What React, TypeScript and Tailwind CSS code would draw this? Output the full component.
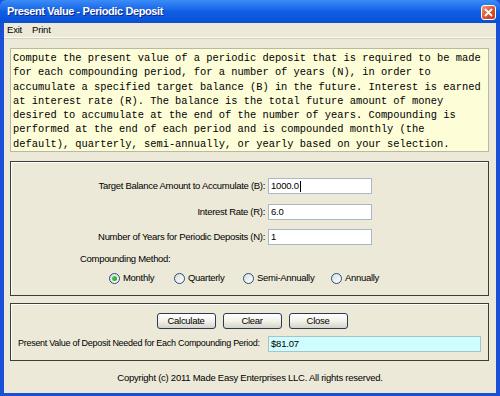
import React from 'react';

const sans = { fontFamily: '"Liberation Sans", Arial, sans-serif' };
const mono = { fontFamily: '"Liberation Mono", "Courier New", monospace' };

const description = [
  'Compute the present value of a periodic deposit that is required to be made',
  'for each compounding period, for a number of years (N), in order to',
  'accumulate a specified target balance (B) in the future. Interest is earned',
  'at interest rate (R). The balance is the total future amount of money',
  'desired to accumulate at the end of the number of years. Compounding is',
  'performed at the end of each period and is compounded monthly (the',
  'default), quarterly, semi-annually, or yearly based on your selection.',
];

const fields = [
  { label: 'Target Balance Amount to Accumulate (B):', value: '1000.0', mt: 'mt-0' },
  { label: 'Interest Rate (R):', value: '6.0', mt: 'mt-[10px]' },
  { label: 'Number of Years for Periodic Deposits (N):', value: '1', mt: 'mt-[9px]' },
];

const methods = [
  { label: 'Monthly', w: 'w-[65px]', checked: true },
  { label: 'Quarterly', w: 'w-[69px]', checked: false },
  { label: 'Semi-Annually', w: 'w-[88px]', checked: false },
  { label: 'Annually', w: 'w-[70px]', checked: false },
];

const Radio = ({ checked }: { checked: boolean }) => (
  <span className="flex h-[11px] w-[11px] items-center justify-center rounded-full border border-[#1c5180] bg-gradient-to-br from-[#dcdcd6] to-white">
    {checked && <span className="h-[5px] w-[5px] rounded-full bg-gradient-to-br from-[#55d655] to-[#1f9a1f]" />}
  </span>
);

const XpButton = ({ children }: { children: React.ReactNode }) => (
  <button className="flex h-[16px] w-[59px] items-center justify-center rounded-[3px] border border-[#2b3a55] bg-gradient-to-b from-white via-[#f3f2ec] to-[#d6d3c6] text-[9.5px] tracking-[-0.3px] text-black">
    {children}
  </button>
);

export default function App() {
  return (
    <div className="flex h-[396px] w-[500px] flex-col bg-[#1a4fd8]" style={sans}>
      {/* title bar */}
      <div className="flex h-[23px] shrink-0 items-center justify-between rounded-t-[6px] bg-gradient-to-b from-[#3d8cf7] via-[#0f5fe6] to-[#0a4fd4] pl-[7px] pr-[4px]">
        <span className="text-[11px] font-bold tracking-[-0.4px] text-white [text-shadow:1px_1px_0_#0a2a8a]">
          Present Value - Periodic Deposit
        </span>
        <span className="mt-[2px] flex h-[15px] w-[15px] items-center justify-center rounded-[3px] border border-white bg-gradient-to-br from-[#f29a72] via-[#e0542a] to-[#c4401c]">
          <svg width="9" height="9" viewBox="0 0 9 9">
            <path d="M1.5 1.5 L7.5 7.5 M7.5 1.5 L1.5 7.5" stroke="white" strokeWidth="1.8" strokeLinecap="round" />
          </svg>
        </span>
      </div>

      {/* window body */}
      <div className="mx-[4px] mb-[3px] flex flex-1 flex-col bg-[#ece9d8]">
        <div className="flex h-[15px] items-center gap-[10px] border-b border-[#fbfaf5] pl-[3px] text-[9.5px] tracking-[-0.2px] text-black shadow-[0_1px_0_#d4d0c0]">
          <span>Exit</span>
          <span>Print</span>
        </div>

        <div
          className="ml-[6px] mr-[7px] mt-[10px] h-[104px] whitespace-pre border border-[#b9b7a6] bg-[#fdfdd8] pl-[2px] pt-[2px] text-[10.4px] leading-[14.3px] text-black"
          style={mono}
        >
          {description.join('\n')}
        </div>

        {/* input panel */}
        <div className="ml-[6px] mr-[7px] mt-[9px] h-[135px] border border-[#3c3c3c] pt-[16px] shadow-[inset_1px_1px_0_#ffffff]">
          {fields.map((f) => (
            <div key={f.label} className={`flex h-[16px] items-center ${f.mt}`}>
              <span className="w-[254px] text-right text-[9.5px] tracking-[-0.3px] text-black">{f.label}</span>
              <span className="ml-[3px] flex h-[16px] w-[104px] items-center border border-[#a9b8c9] bg-white pl-[2px] text-[9.5px] tracking-[-0.2px] text-black">
                {f.value}
                {f.value === '1000.0' && <span className="ml-px h-[11px] w-px bg-black" />}
              </span>
            </div>
          ))}
          <div className="mt-[8px] pl-[69px] text-[9.5px] leading-[12px] tracking-[-0.3px] text-black">Compounding Method:</div>
          <div className="mt-[7px] flex h-[12px] items-center pl-[98px]">
            {methods.map((m) => (
              <div key={m.label} className={`flex items-center gap-[3px] ${m.w}`}>
                <Radio checked={m.checked} />
                <span className="text-[9.5px] tracking-[-0.3px] text-black">{m.label}</span>
              </div>
            ))}
          </div>
        </div>

        {/* result panel */}
        <div className="ml-[6px] mr-[7px] mt-[7px] h-[58px] border border-[#3c3c3c] pt-[9px] shadow-[inset_1px_1px_0_#ffffff]">
          <div className="flex justify-center gap-[7px] pl-[5px]">
            <XpButton>Calculate</XpButton>
            <XpButton>Clear</XpButton>
            <XpButton>Close</XpButton>
          </div>
          <div className="mt-[7px] flex h-[16px] items-center pl-[7px]">
            <span className="w-[247px] shrink-0 whitespace-nowrap text-[9px] tracking-[-0.28px] text-black">
              Present Value of Deposit Needed for Each Compounding Period:
            </span>
            <span className="ml-[3px] flex h-[16px] w-[213px] items-center border border-[#a6c4cc] bg-[#cffcfc] pl-[2px] text-[9.5px] tracking-[-0.2px] text-black">
              $81.07
            </span>
          </div>
        </div>

        <div className="flex flex-1 items-center justify-center pt-[2px] text-[9.5px] tracking-[-0.25px] text-black">
          Copyright (c) 2011 Made Easy Enterprises LLC. All rights reserved.
        </div>
      </div>
    </div>
  );
}
